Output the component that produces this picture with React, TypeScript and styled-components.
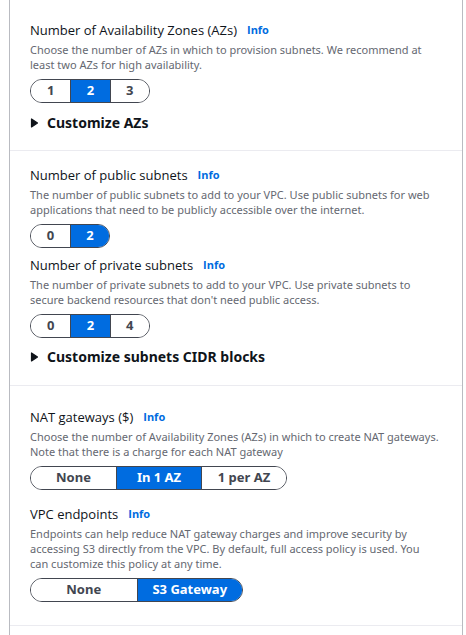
import React, { useState } from "react";
import styled, { createGlobalStyle } from "styled-components";

const GlobalStyle = createGlobalStyle`
  * { box-sizing: border-box; }
  body {
    margin: 0;
    background: #ffffff;
    color: #0f141a;
    font-family: "Noto Sans", "Open Sans", sans-serif;
  }
`;

const Panel = styled.main`
  min-height: 100vh;
  margin: 0 3px 0 9px;
  border: solid #b9bbc1;
  border-width: 0 1px;
`;

const Section = styled.section<{ $top: number; $bottom: number; $gap: number }>`
  display: flex;
  flex-direction: column;
  gap: ${(p) => p.$gap}px;
  padding: ${(p) => p.$top}px 20px ${(p) => p.$bottom}px;
  border-bottom: 1px solid #ebebf0;
`;

const Field = styled.div`
  display: flex;
  flex-direction: column;
  align-items: flex-start;
`;

const FieldHeader = styled.div`
  display: flex;
  align-items: center;
  gap: 10px;
  height: 20px;
  font-family: "Open Sans", "Noto Sans", sans-serif;
  line-height: 20px;
`;

const FieldLabel = styled.span`
  font-size: 13px;
`;

const InfoLink = styled.a`
  color: #006ce0;
  font-size: 11px;
  font-weight: 700;
  text-decoration: none;
`;

const Description = styled.p`
  margin: 2px 0 7px;
  color: #656871;
  font-size: 11px;
  line-height: 15px;
  white-space: pre-line;
`;

const Segments = styled.div<{ $width: number }>`
  display: grid;
  grid-auto-flow: column;
  grid-auto-columns: 1fr;
  width: ${(p) => p.$width}px;
  max-width: 100%;
  height: 24px;
  overflow: hidden;
  border: 1px solid #424650;
  border-radius: 12px;
`;

const Segment = styled.button<{ $selected: boolean }>`
  padding: 0 0 2px;
  border: 0;
  background: ${(p) => (p.$selected ? "#006ce0" : "#ffffff")};
  color: ${(p) => (p.$selected ? "#ffffff" : "#424650")};
  font: 700 13px/20px "Noto Sans", "Open Sans", sans-serif;
  cursor: pointer;

  & + & {
    border-left: 1px solid #424650;
  }
`;

const Expander = styled.button`
  display: flex;
  align-items: center;
  align-self: flex-start;
  gap: 9px;
  padding: 0;
  border: 0;
  background: none;
  color: #0f141a;
  font: 700 14px/24px "Noto Sans", "Open Sans", sans-serif;
  cursor: pointer;
`;

type ChoiceFieldProps = {
  id: string;
  label: string;
  description: string;
  options: string[];
  initial: string;
  width: number;
};

function ChoiceField({ id, label, description, options, initial, width }: ChoiceFieldProps) {
  const [value, setValue] = useState(initial);
  return (
    <Field>
      <FieldHeader>
        <FieldLabel id={id}>{label}</FieldLabel>
        <InfoLink href={`#${id}`}>Info</InfoLink>
      </FieldHeader>
      <Description id={`${id}-description`}>{description}</Description>
      <Segments role="group" aria-labelledby={id} aria-describedby={`${id}-description`} $width={width}>
        {options.map((option) => (
          <Segment
            key={option}
            type="button"
            aria-pressed={option === value}
            $selected={option === value}
            onClick={() => setValue(option)}
          >
            {option}
          </Segment>
        ))}
      </Segments>
    </Field>
  );
}

function Customize({ children }: { children: React.ReactNode }) {
  return (
    <Expander type="button" aria-expanded={false}>
      <svg width="8" height="10" viewBox="0 0 8 10" aria-hidden="true">
        <path d="M1.5 1v8l6-4z" fill="#0f141a" stroke="#0f141a" strokeWidth="1.2" strokeLinejoin="round" />
      </svg>
      {children}
    </Expander>
  );
}

export default function App() {
  return (
    <>
      <GlobalStyle />
      <Panel>
        <Section $top={20} $bottom={15} $gap={8}>
          <ChoiceField
            id="availability-zones"
            label="Number of Availability Zones (AZs)"
            description={"Choose the number of AZs in which to provision subnets. We recommend at\nleast two AZs for high availability."}
            options={["1", "2", "3"]}
            initial="2"
            width={120}
          />
          <Customize>Customize AZs</Customize>
        </Section>
        <Section $top={14} $bottom={16} $gap={7}>
          <ChoiceField
            id="public-subnets"
            label="Number of public subnets"
            description={"The number of public subnets to add to your VPC. Use public subnets for web\napplications that need to be publicly accessible over the internet."}
            options={["0", "2"]}
            initial="2"
            width={80}
          />
          <ChoiceField
            id="private-subnets"
            label="Number of private subnets"
            description={"The number of private subnets to add to your VPC. Use private subnets to\nsecure backend resources that don't need public access."}
            options={["0", "2", "4"]}
            initial="2"
            width={120}
          />
          <Customize>Customize subnets CIDR blocks</Customize>
        </Section>
        <Section $top={21} $bottom={23} $gap={14}>
          <ChoiceField
            id="nat-gateways"
            label="NAT gateways ($)"
            description={"Choose the number of Availability Zones (AZs) in which to create NAT gateways.\nNote that there is a charge for each NAT gateway"}
            options={["None", "In 1 AZ", "1 per AZ"]}
            initial="In 1 AZ"
            width={257}
          />
          <ChoiceField
            id="vpc-endpoints"
            label="VPC endpoints"
            description={"Endpoints can help reduce NAT gateway charges and improve security by\naccessing S3 directly from the VPC. By default, full access policy is used. You\ncan customize this policy at any time."}
            options={["None", "S3 Gateway"]}
            initial="S3 Gateway"
            width={213}
          />
        </Section>
      </Panel>
    </>
  );
}
